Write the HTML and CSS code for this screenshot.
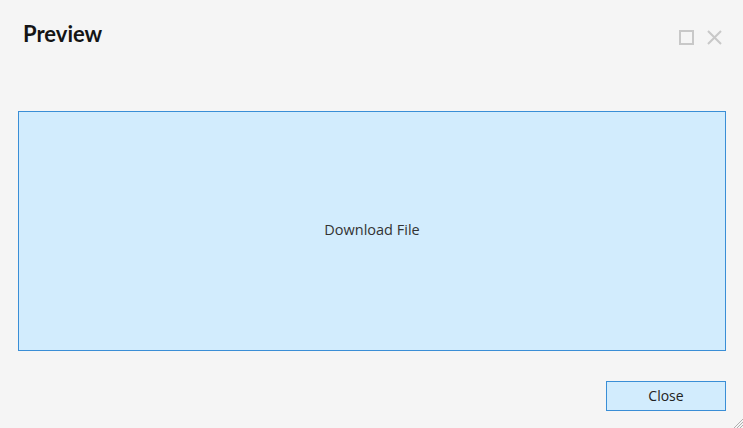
FILE: index.html
```html
<!DOCTYPE html>
<html lang="en">
<head>
    <meta charset="utf-8">
    <meta name="viewport" content="width=device-width, initial-scale=1.0">
    <title>Preview</title>
    <link rel="stylesheet" href="styles.css">
</head>
<body>
    <div class="dialog">
        <div class="dialog-header">
            <h1 class="dialog-title">Preview</h1>
            <div class="dialog-controls">
                <span class="ctrl-max"></span>
                <svg class="ctrl-close" width="15" height="15" viewBox="0 0 15 15">
                    <path d="M1 1 L14 14 M14 1 L1 14" stroke="#c8c8c8" stroke-width="2" fill="none"/>
                </svg>
            </div>
        </div>
        <div class="dialog-body">
            <div class="download-box">Download File</div>
        </div>
        <div class="dialog-footer">
            <button class="close-button">Close</button>
        </div>
        <svg class="resize-grip" width="10" height="10" viewBox="0 0 10 10">
            <path d="M10 1 L1 10 M10 4 L4 10 M10 7 L7 10" stroke="#b0b0b0" stroke-width="1" fill="none"/>
        </svg>
    </div>
</body>
</html>
```

FILE: styles.css
```css
html, body {
    margin: 0;
    height: 100%;
}
body {
    background-color: #f5f5f5;
    font-family: "Open Sans", Arial, sans-serif;
    color: #333;
}
.dialog {
    position: relative;
    height: 428px;
    box-sizing: border-box;
    padding: 0 17px 0 18px;
    display: flex;
    flex-direction: column;
}
.dialog-header {
    display: flex;
    justify-content: space-between;
    align-items: flex-start;
    height: 111px;
}
.dialog-title {
    margin: 19px 0 0 5px;
    font-family: Lato, sans-serif;
    font-weight: 700;
    font-size: 22px;
    line-height: 30px;
    color: #151515;
}
.dialog-controls {
    display: flex;
    gap: 13px;
    margin-top: 30px;
    margin-right: 4px;
}
.ctrl-max {
    width: 11px;
    height: 11px;
    border: 2px solid #c8c8c8;
}
.download-box {
    box-sizing: border-box;
    height: 240px;
    padding-bottom: 3px;
    border: 1px solid #3a8ed6;
    background-color: #d2ecfd;
    display: flex;
    align-items: center;
    justify-content: center;
    font-size: 14.5px;
    color: #333;
}
.dialog-footer {
    display: flex;
    justify-content: flex-end;
    margin-top: 30px;
}
.close-button {
    width: 120px;
    height: 30px;
    border: 1px solid #3a8ed6;
    background-color: #d2ecfd;
    font-family: "Open Sans", Arial, sans-serif;
    font-size: 14px;
    color: #222;
    padding: 0 0 2px;
    cursor: pointer;
}
.resize-grip {
    position: absolute;
    right: 0;
    bottom: 0;
}
```
